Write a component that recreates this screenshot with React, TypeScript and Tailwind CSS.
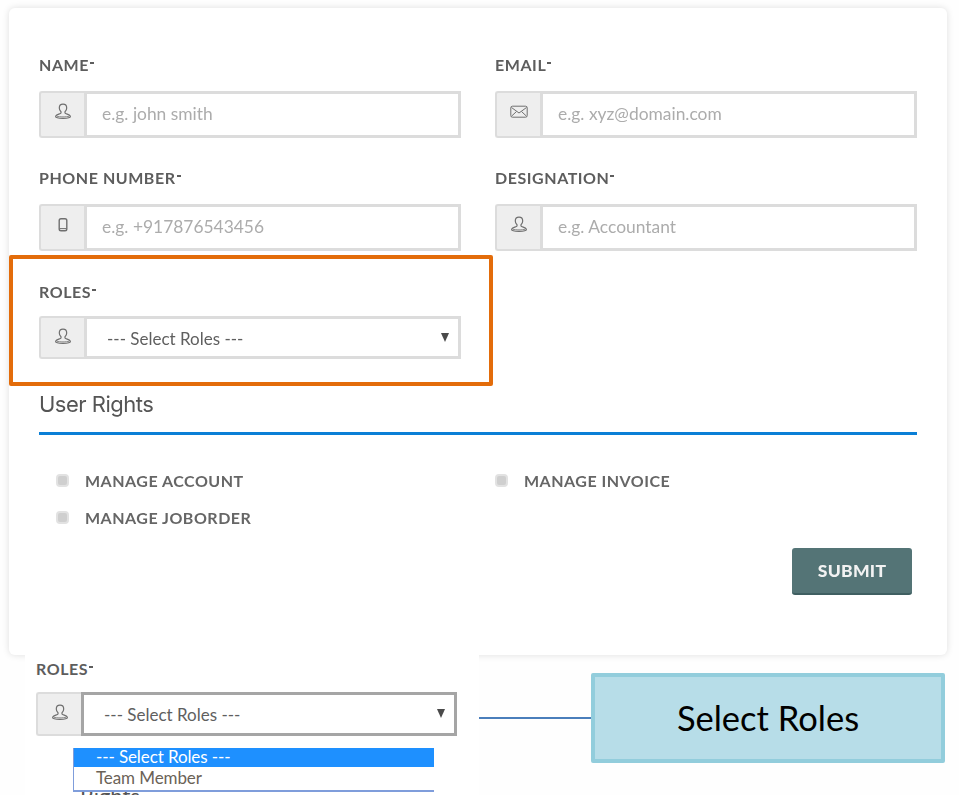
const lato = "font-['Lato','Liberation_Sans',sans-serif]";

function UserIcon() {
  return (
    <svg width="18" height="18" viewBox="0 0 18 18" fill="none" stroke="#6f6f6f" strokeWidth="1.2" strokeLinejoin="round">
      <path d="M9 1.2c2.4 0 3.7 1.7 3.7 3.8 0 1.7-.8 3-1.7 3.8v1.2c0 .8 4.6 1.2 5.4 3.3.3 1.1-2.3 2-7.4 2s-7.7-.9-7.4-2c.8-2.1 5.4-2.5 5.4-3.3V8.8C6.1 8 5.3 6.7 5.3 5c0-2.1 1.3-3.8 3.7-3.8z" />
      <path d="M3 13.2c2 .9 10 .9 12 0" strokeWidth="0.8" />
    </svg>
  );
}

function PhoneIcon() {
  return (
    <svg width="18" height="18" viewBox="0 0 18 18" fill="none" stroke="#6f6f6f" strokeWidth="1.4">
      <rect x="5.2" y="2.8" width="7.6" height="12" rx="1.8" />
      <path d="M5.5 12.6h7" strokeWidth="1" />
    </svg>
  );
}

function MailIcon() {
  return (
    <svg width="18" height="18" viewBox="0 0 18 18" fill="none" stroke="#6f6f6f" strokeWidth="1">
      <rect x="0.8" y="3.2" width="16.4" height="11" rx="1.6" />
      <path d="M1.5 4.5 9 10l7.5-5.5M1.5 13.2 6.5 8.5M16.5 13.2l-5-4.7" />
    </svg>
  );
}

function Label({ text }: { text: string }) {
  return (
    <div className={`${lato} flex h-5 items-center text-[16px] font-bold leading-5 tracking-[0.55px] text-[#5d5d5d]`}>
      {text}
      <span className="mb-[5px] ml-[1px] h-[2px] w-[4px] bg-[#5d5d5d]" />
    </div>
  );
}

function AddOn({ children, h }: { children: React.ReactNode; h: string }) {
  return (
    <div className={`flex w-[45px] shrink-0 items-start justify-center rounded-l-[3px] border-2 border-r-0 border-[#dcdcdc] bg-[#eeeeee] pt-[10px] ${h}`}>
      {children}
    </div>
  );
}

function Field({ label, placeholder, icon }: { label: string; placeholder: string; icon: React.ReactNode }) {
  return (
    <div className="w-[422px]">
      <Label text={label} />
      <div className="mt-4 flex h-[47px]">
        <AddOn h="h-[47px]">{icon}</AddOn>
        <input
          readOnly
          placeholder={placeholder}
          className={`${lato} h-[47px] w-[377px] border-[3px] border-[#dcdcdc] bg-white pb-[2px] pl-[15px] text-[17.4px] text-[#555] outline-none placeholder:text-[#acacac]`}
        />
      </div>
    </div>
  );
}

function SelectBox({ dark }: { dark?: boolean }) {
  return (
    <div className={`flex ${dark ? "h-[44px]" : "h-[43px]"}`}>
      <AddOn h={dark ? "h-[44px]" : "h-[43px]"}>
        <UserIcon />
      </AddOn>
      <div
        className={`${lato} flex w-[377px] items-center justify-between border-[3px] bg-white pl-[20px] pr-[4px] pt-[2px] text-[17px] text-[#5f5f5f] ${dark ? "border-[#a5a5a5]" : "border-[#dcdcdc]"}`}
      >
        <span>--- Select Roles ---</span>
        <span className="mb-[3px] mr-[5px] h-0 w-0 border-x-[4.5px] border-t-[9px] border-x-transparent border-t-[#4a4a4a]" />
      </div>
    </div>
  );
}

function Right({ text }: { text: string }) {
  return (
    <div className="flex h-5 items-center pl-[17px]">
      <span className="mb-[2px] h-[13px] w-[13px] rounded-[4px] border-2 border-[#e2e2e2] bg-[#cfcfcf]" />
      <span className={`${lato} ml-[16px] text-[16px] font-bold tracking-[0.5px] text-[#666666]`}>{text}</span>
    </div>
  );
}

export default function App() {
  return (
    <div className="relative h-[795px] w-[959px] overflow-hidden bg-[#fefefe]">
      <div className="ml-[9px] h-[655px] pt-2">
        <div className="h-[647px] w-[938px] rounded-[6px] bg-white px-[30px] pt-[47px] shadow-[0_0_7px_rgba(0,0,0,0.13)] blur-[0.4px]">
          <div className="flex gap-[34px]">
            <Field label="NAME" placeholder="e.g. john smith" icon={<UserIcon />} />
            <Field label="EMAIL" placeholder="e.g. xyz@domain.com" icon={<MailIcon />} />
          </div>
          <div className="mt-[30px] flex gap-[34px]">
            <Field label="PHONE NUMBER" placeholder="e.g. +917876543456" icon={<PhoneIcon />} />
            <Field label="DESIGNATION" placeholder="e.g. Accountant" icon={<UserIcon />} />
          </div>

          <div className="-ml-[30px] mt-1 w-[484px] rounded-[2px] border-[4px] border-[#e36c0a] pb-[23px] pl-[26px] pt-[23px]">
            <Label text="ROLES" />
            <div className="mt-[14px] w-[422px]">
              <SelectBox />
            </div>
          </div>

          <h2 className="mt-[3px] h-[30px] font-['Inter','Liberation_Sans',sans-serif] text-[22px] font-normal leading-[30px] tracking-[-0.5px] text-[#555555]">
            User Rights
          </h2>
          <div className="mt-[13px] h-[3px] w-[878px] bg-[#0a7fd6]" />

          <div className="mt-[36px] flex">
            <div className="w-[439px]">
              <Right text="MANAGE ACCOUNT" />
              <div className="mt-[17px]">
                <Right text="MANAGE JOBORDER" />
              </div>
            </div>
            <Right text="MANAGE INVOICE" />
          </div>

          <div className="mt-5 flex w-[878px] justify-end pr-[5px]">
            <button className={`${lato} h-[47px] w-[120px] rounded-[3px] border-b-2 border-[#3f5f61] bg-[#547476] pt-[2px] text-[17.5px] font-black tracking-[0.3px] text-[#f2f2f2]`}>
              SUBMIT
            </button>
          </div>
        </div>
      </div>

      <div className="flex h-[140px] items-start">
        <div className="relative z-10 ml-[25px] h-[140px] w-[454px] overflow-hidden bg-white pl-[11px] pt-1">
          <Label text="ROLES" />
          <div className="mt-[13px] w-[421px]">
            <SelectBox dark />
          </div>
          <div className={`${lato} ml-[44px] mt-[47px] text-[22px] leading-[26px] text-[#555]`}>Rights</div>
          <div className={`${lato} absolute left-[48px] top-[93px] w-[361px] border-b-2 border-l border-[#7f9ddb] bg-white text-[17px] leading-[21px] tracking-[-0.1px]`}>
            <div className="h-[19px] bg-[#1e90ff] pl-[22px] leading-[18px] text-white">--- Select Roles ---</div>
            <div className="mt-px h-[22px] pl-[22px] leading-[20px] text-[#6b6257]">Team Member</div>
          </div>
        </div>
        <div className="mt-[62px] h-[2px] w-[112px] bg-[#4a7ebb]" />
        <div className={`${lato} mt-[18px] flex h-[90px] w-[354px] items-center justify-center rounded-[2px] border-[4px] border-[#92cddc] bg-[#b7dde8] text-[34.5px] text-black`}>
          Select Roles
        </div>
      </div>
    </div>
  );
}
